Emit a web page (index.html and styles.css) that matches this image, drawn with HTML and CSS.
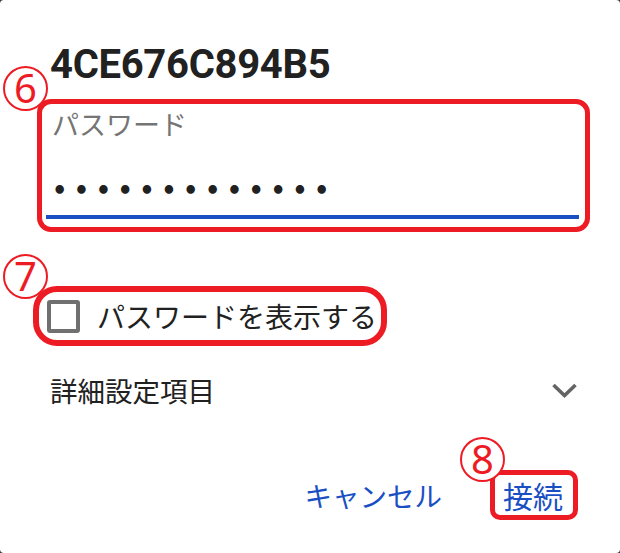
FILE: index.html
```html
<!DOCTYPE html>
<html lang="ja">
<head>
<meta charset="utf-8">
<link rel="stylesheet" href="styles.css">
</head>
<body>
<div class="dialog">
  <h1 class="title">4CE676C894B5</h1>

  <div class="annot annot-field">
    <span class="mark mark-6">6</span>
    <div class="field">
      <div class="field-label">パスワード</div>
      <div class="field-value">•••••••••••••</div>
      <div class="field-line"></div>
    </div>
  </div>

  <div class="annot annot-check">
    <span class="mark mark-7">7</span>
    <span class="checkbox"></span>
    <span class="check-label">パスワードを表示する</span>
  </div>

  <div class="advanced">
    <span class="advanced-label">詳細設定項目</span>
    <svg class="chevron" width="25" height="15" viewBox="0 0 25 15">
      <polyline points="1.5,2 12.5,12.5 23.5,2" fill="none" stroke="#646464" stroke-width="3.6"/>
    </svg>
  </div>

  <div class="actions">
    <span class="btn">キャンセル</span>
    <div class="annot annot-btn">
      <span class="mark mark-8">8</span>
      <span class="btn btn-primary">接続</span>
    </div>
  </div>
</div>
</body>
</html>
```

FILE: styles.css
```css
html, body {
  margin: 0;
  padding: 0;
  background: #3a3a3a;
}

.dialog {
  box-sizing: border-box;
  width: 620px;
  height: 553px;
  background: #ffffff;
  border-radius: 4px;
  padding: 41px 41px 0 50px;
  font-family: "Noto Sans CJK JP", Roboto, sans-serif;
  color: #212121;
  overflow: hidden;
}

.title {
  margin: 0;
  font-family: Roboto, "Noto Sans CJK JP", sans-serif;
  font-weight: 700;
  font-size: 40px;
  line-height: 48px;
  color: #212121;
  letter-spacing: -0.3px;
}

.annot {
  position: relative;
  border: 5px solid #ed1c24;
  background: #ffffff;
}

.mark {
  position: absolute;
  box-sizing: border-box;
  width: 45px;
  height: 45px;
  border: 2px solid #ed1c24;
  border-radius: 50%;
  background: #ffffff;
  color: #ed1c24;
  font-family: "Noto Sans", Roboto, sans-serif;
  font-size: 40px;
  line-height: 40px;
  text-align: center;
  z-index: 2;
}

.annot-field {
  margin: 10px -11px 0 -13px;
  border-radius: 14px;
  padding: 4px 6px 8px 4px;
}

.mark-6 {
  left: -39px;
  top: -38px;
}

.field-label {
  padding-left: 6px;
  font-size: 27px;
  line-height: 32px;
  color: #757575;
}

.field-value {
  padding-left: 6px;
  margin-top: 36px;
  font-family: "DejaVu Sans", sans-serif;
  font-size: 24px;
  line-height: 30px;
  letter-spacing: 6.5px;
  color: #212121;
  font-weight: 700;
}

.field-line {
  margin-top: 9px;
  height: 4px;
  background: #1a4fc4;
}

.annot-check {
  display: inline-flex;
  align-items: center;
  margin: 54px 0 0 -17px;
  border-width: 6px;
  border-radius: 24px;
  height: 48px;
  padding: 0 4px 0 8px;
}

.mark-7 {
  left: -36px;
  top: -38px;
}

.checkbox {
  box-sizing: border-box;
  width: 33px;
  height: 33px;
  border: 4px solid #707070;
  border-radius: 3px;
  margin-right: 17px;
}

.check-label {
  font-size: 28px;
  line-height: 36px;
  color: #212121;
}

.advanced {
  display: flex;
  align-items: center;
  justify-content: space-between;
  height: 44px;
  margin-top: 22px;
}

.advanced-label {
  font-size: 27.5px;
  line-height: 36px;
  color: #212121;
}

.chevron {
  margin-right: 2px;
}

.actions {
  display: flex;
  justify-content: flex-end;
  align-items: center;
  margin-top: 58px;
  margin-right: 1px;
}

.btn {
  font-size: 27.5px;
  line-height: 36px;
  color: #1a4fc4;
}

.actions > .btn {
  margin-right: 48px;
}

.btn-primary {
  font-size: 30px;
}

.annot-btn {
  border-radius: 10px;
  height: 40px;
  padding: 0 10px 0 8px;
  display: flex;
  align-items: center;
}

.mark-8 {
  left: -35px;
  top: -38px;
}
```
